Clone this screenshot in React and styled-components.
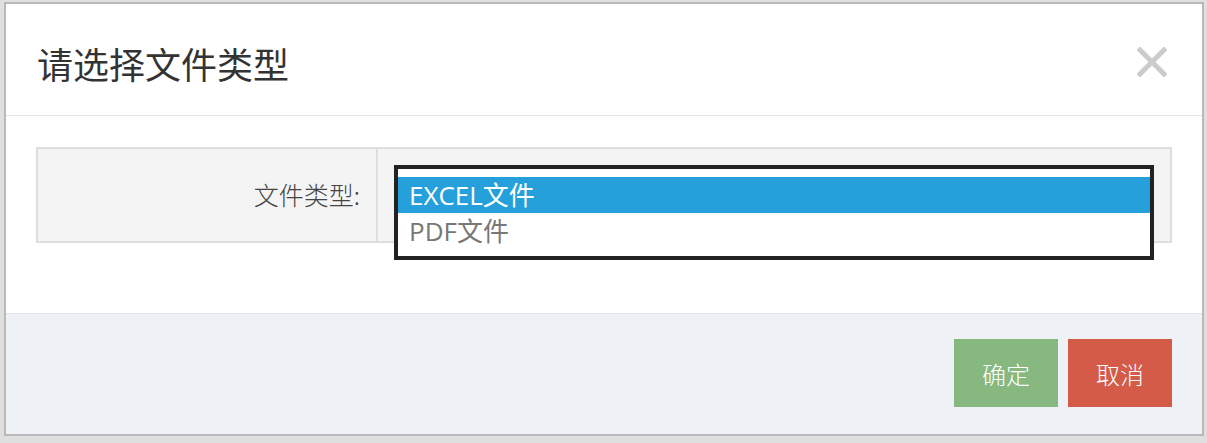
import styled, { createGlobalStyle } from "styled-components";

const GlobalStyle = createGlobalStyle`
  html, body {
    margin: 0;
    padding: 0;
    background: #dfdfdf;
  }
  body {
    font-family: "Open Sans", "Noto Sans CJK SC", sans-serif;
  }
  * {
    box-sizing: border-box;
  }
`;

const Backdrop = styled.div`
  width: 1207px;
  height: 443px;
  padding: 2px 0 0 4px;
  background: #dfdfdf;
`;

const Modal = styled.div`
  width: 1200px;
  height: 434px;
  border: 2px solid #b9b9b9;
  background: #fff;
  display: flex;
  flex-direction: column;
`;

const Header = styled.header`
  height: 112px;
  border-bottom: 1px solid #e5e5e5;
  display: flex;
  align-items: center;
  justify-content: space-between;
  padding: 6px 35px 0 31px;
`;

const Title = styled.h4`
  margin: 0;
  font-family: "Noto Sans CJK SC", sans-serif;
  font-size: 36px;
  font-weight: 400;
  color: #333;
`;

const CloseButton = styled.button`
  border: 0;
  padding: 0;
  background: none;
  width: 30px;
  height: 30px;
  margin-top: -2px;
  cursor: pointer;
  svg {
    display: block;
  }
`;

const Body = styled.div`
  height: 197px;
  padding: 31px 30px 0 30px;
`;

const FormTable = styled.div`
  display: grid;
  grid-template-columns: 340px 1fr;
  height: 96px;
  border: 2px solid #dedede;
  background: #f4f4f4;
`;

const LabelCell = styled.div`
  display: flex;
  align-items: center;
  justify-content: flex-end;
  padding: 0 16px 2px 0;
  border-right: 2px solid #dedede;
  font-family: "Noto Sans CJK SC", sans-serif;
  font-size: 25px;
  font-weight: 300;
  color: #444;
`;

const ValueCell = styled.div`
  position: relative;
`;

const ListBox = styled.div`
  position: absolute;
  top: 16px;
  left: 16px;
  right: 16px;
  border: 4px solid #222;
  background: #fff;
  padding: 8px 0 7px;
`;

const Option = styled.div`
  height: 36px;
  line-height: 36px;
  padding-left: 11px;
  font-family: "Open Sans", "Noto Sans CJK SC", sans-serif;
  font-size: 26px;
  color: ${({ $selected }) => ($selected ? "#fff" : "#777")};
  background: ${({ $selected }) => ($selected ? "#26a0da" : "transparent")};
`;

const Footer = styled.footer`
  flex: 1;
  border-top: 1px solid #e2e6eb;
  background: #eef1f6;
  display: flex;
  justify-content: flex-end;
  align-items: flex-start;
  gap: 10px;
  padding: 25px 30px 0;
`;

const ActionButton = styled.button`
  width: 104px;
  height: 68px;
  border: 0;
  padding: 0;
  background: ${({ $tone }) => ($tone === "danger" ? "#d35b48" : "#86b87f")};
  color: #fff;
  font-family: "Noto Sans CJK SC", sans-serif;
  font-size: 24px;
  font-weight: 300;
  cursor: pointer;
`;

const options = [
  { label: "EXCEL文件", selected: true },
  { label: "PDF文件", selected: false },
];

export default function App() {
  return (
    <>
      <GlobalStyle />
      <Backdrop>
        <Modal>
          <Header>
            <Title>请选择文件类型</Title>
            <CloseButton aria-label="关闭">
              <svg width="30" height="30" viewBox="0 0 30 30">
                <path
                  d="M3 3 L27 27 M27 3 L3 27"
                  stroke="#cbcbcb"
                  strokeWidth="5"
                  strokeLinecap="square"
                />
              </svg>
            </CloseButton>
          </Header>
          <Body>
            <FormTable>
              <LabelCell>文件类型:</LabelCell>
              <ValueCell>
                <ListBox role="listbox">
                  {options.map((o) => (
                    <Option key={o.label} $selected={o.selected} role="option">
                      {o.label}
                    </Option>
                  ))}
                </ListBox>
              </ValueCell>
            </FormTable>
          </Body>
          <Footer>
            <ActionButton>确定</ActionButton>
            <ActionButton $tone="danger">取消</ActionButton>
          </Footer>
        </Modal>
      </Backdrop>
    </>
  );
}
